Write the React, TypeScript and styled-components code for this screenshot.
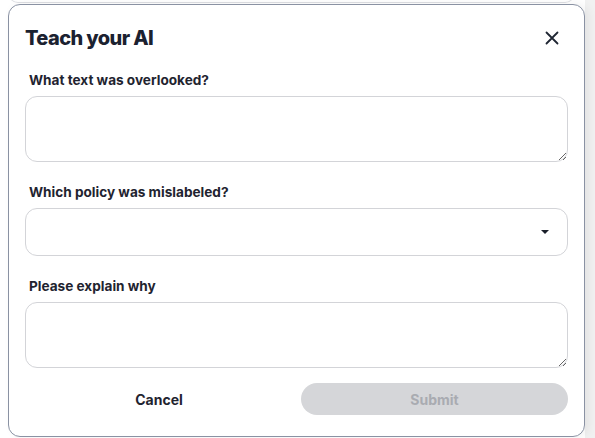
import React from "react";
import styled, { createGlobalStyle } from "styled-components";

const Global = createGlobalStyle`
  html, body { margin: 0; padding: 0; }
  body {
    font-family: Inter, "Noto Sans", Arial, sans-serif;
    background: linear-gradient(to right, #ffffff 585px, #f1f1f1 585px);
    width: 595px;
    height: 438px;
    overflow: hidden;
  }
`;

const Page = styled.div`
  width: 595px;
  height: 438px;
  display: flex;
  flex-direction: column;
  padding-left: 8px;
  box-sizing: border-box;
`;

const GhostCard = styled.div`
  width: 567px;
  height: 10px;
  margin-top: -7px;
  border: 1px solid #dedfe3;
  border-top: none;
  border-radius: 0 0 10px 10px;
  box-sizing: border-box;
  background: #fff;
`;

const Card = styled.div`
  margin-top: 1px;
  width: 577px;
  height: 433px;
  box-sizing: border-box;
  border: 1px solid #8a92a3;
  border-radius: 12px;
  background: #fff;
  box-shadow: 4px 0 10px rgba(0, 0, 0, 0.06);
  padding: 21px 16px 0 16px;
  display: flex;
  flex-direction: column;
`;

const Header = styled.div`
  display: flex;
  align-items: center;
  justify-content: space-between;
  height: 24px;
`;

const Title = styled.h2`
  margin: 0;
  font-size: 20px;
  line-height: 24px;
  font-weight: 800;
  color: #1b2130;
  letter-spacing: -0.6px;
`;

const CloseButton = styled.button`
  border: none;
  background: none;
  padding: 0;
  width: 16px;
  height: 16px;
  margin-right: 8px;
  display: flex;
  align-items: center;
  justify-content: center;
  color: #1f2633;
`;

const Form = styled.div`
  margin-top: 22px;
  display: flex;
  flex-direction: column;
  gap: 22px;
`;

const Field = styled.div`
  display: flex;
  flex-direction: column;
  gap: 8px;
`;

const Label = styled.label`
  font-size: 13.6px;
  line-height: 16px;
  font-weight: 700;
  color: #1f2430;
  padding-left: 4px;
`;

const TextArea = styled.textarea`
  width: 543px;
  height: 66px;
  box-sizing: border-box;
  border: 1px solid #d3d4d8;
  border-radius: 12px;
  font-family: inherit;
  font-size: 14px;
  padding: 10px 14px;
  outline: none;
  background: #fff;
`;

const SelectBox = styled.div`
  width: 543px;
  height: 48px;
  box-sizing: border-box;
  border: 1px solid #d3d4d8;
  border-radius: 12px;
  display: flex;
  align-items: center;
  justify-content: flex-end;
  padding-right: 18px;
`;

const Caret = styled.span`
  width: 0;
  height: 0;
  border-left: 4px solid transparent;
  border-right: 4px solid transparent;
  border-top: 4px solid #1a1f2a;
`;

const Actions = styled.div`
  margin-top: 15px;
  display: grid;
  grid-template-columns: 268px 267px;
  gap: 8px;
`;

const Button = styled.button<{ $primary?: boolean }>`
  height: 32px;
  border: none;
  border-radius: 16px;
  font-family: inherit;
  font-size: 14px;
  font-weight: 700;
  background: ${(p) => (p.$primary ? "#d5d6d9" : "transparent")};
  color: ${(p) => (p.$primary ? "#a9abb1" : "#1f2430")};
  cursor: pointer;
`;

export default function App() {
  return (
    <>
      <Global />
      <Page>
        <GhostCard />
        <Card>
          <Header>
            <Title>Teach your AI</Title>
            <CloseButton aria-label="Close">
              <svg width="14" height="14" viewBox="0 0 14 14" fill="none">
                <path d="M1.5 1.5 L12.5 12.5 M12.5 1.5 L1.5 12.5" stroke="currentColor" strokeWidth="1.8" strokeLinecap="round" />
              </svg>
            </CloseButton>
          </Header>
          <Form>
            <Field>
              <Label>What text was overlooked?</Label>
              <TextArea />
            </Field>
            <Field>
              <Label>Which policy was mislabeled?</Label>
              <SelectBox>
                <Caret />
              </SelectBox>
            </Field>
            <Field>
              <Label>Please explain why</Label>
              <TextArea />
            </Field>
          </Form>
          <Actions>
            <Button>Cancel</Button>
            <Button $primary disabled>Submit</Button>
          </Actions>
        </Card>
      </Page>
    </>
  );
}
